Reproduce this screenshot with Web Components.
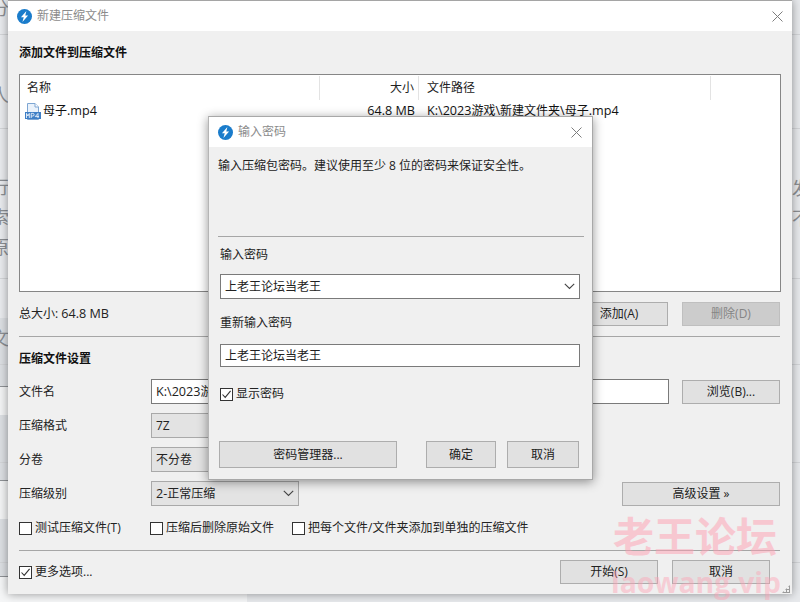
<!DOCTYPE html>
<html lang="zh">
<head>
<meta charset="utf-8">
<title>新建压缩文件</title>
<style>
  html, body { margin: 0; height: 100%; }
  body {
    width: 800px;
    height: 602px;
    overflow: hidden;
    position: relative;
    font: 12px/18px "Open Sans", "Noto Sans CJK SC", sans-serif;
    color: #222;
  }
</style>
</head>
<body>
  <desk-backdrop></desk-backdrop>

  <zip-window>
    <file-list slot="list">
      <file-row name="母子.mp4" size="64.8 MB" path="K:\2023游戏\新建文件夹\母子.mp4"></file-row>
    </file-list>
  </zip-window>

  <password-dialog></password-dialog>

  <water-mark></water-mark>

<script>
// Latin runs are a little larger than the CJK ones in this dialog
const latin = (text) =>
  text.replace(/[\x21-\x7e]+( [\x21-\x7e]+)*/g, (m) => `<span style="font-size:12.6px;line-height:1">${m}</span>`);

const appIcon = (size) => `
  <svg width="${size}" height="${size}" viewBox="0 0 16 16" style="flex:none;display:block">
    <circle cx="8" cy="8" r="8" fill="#1a7ccb"/>
    <path d="M10 2.2 4.2 8.8h3L5.8 13.8l6-6.8H8.8z" fill="#fff"/>
  </svg>`;

const closeIcon = `
  <svg width="11" height="11" viewBox="0 0 11 11" style="display:block">
    <path d="M.5.5l10 10M10.5.5l-10 10" stroke="#7d7d7d" stroke-width="1" fill="none"/>
  </svg>`;

class DeskBackdrop extends HTMLElement {
  constructor() {
    super();
    this.attachShadow({ mode: "open" });
  }

  connectedCallback() {
    this.shadowRoot.innerHTML = `
      <style>
        :host {
          position: absolute;
          inset: 0;
          display: block;
          overflow: hidden;
          color: #8c8f93;
          font-size: 18px;
          line-height: 20px;
          background: linear-gradient(#e9ebee 0 318px, #dcdfe3 318px 386px, #8f9296 386px 387px,
            #f3f4f5 387px 415px, #dcdfe3 415px 480px, #8f9296 480px 481px, #f3f4f5 481px 519px,
            #dcdfe3 519px 576px, #8f9296 576px 577px, #f5f6f7 577px);
        }
        span { position: absolute; }
        .rule { position: absolute; height: 1px; background: #d3d5d8; }
        .right {
          position: absolute;
          left: 792px;
          top: 0;
          width: 8px;
          height: 602px;
          background: #e7e9ec;
        }
        .foot {
          position: absolute;
          left: 247px;
          top: 594px;
          width: 553px;
          height: 8px;
          background: #e7e9ec;
        }
      </style>
      <div class="right"></div>
      <div class="foot"></div>
      <span style="left:-9px;top:-2px">分</span>
      <span style="left:-9px;top:85px">人</span>
      <span style="left:-9px;top:177px">行</span>
      <span style="left:-9px;top:207px">索</span>
      <span style="left:-9px;top:237px">原</span>
      <span style="left:-9px;top:328px">文</span>
      <span style="left:792px;top:178px">发</span>
      <span style="left:792px;top:208px">不</span>
      <div class="rule" style="left:0;width:8px;top:34px"></div>
      <div class="rule" style="left:0;width:8px;top:128px"></div>
      <div class="rule" style="left:0;width:8px;top:278px"></div>
      <div class="rule" style="left:0;width:8px;top:364px"></div>
      <div class="rule" style="left:0;width:8px;top:462px"></div>
      <div class="rule" style="left:0;width:8px;top:562px"></div>
      <div class="rule" style="left:792px;width:8px;top:34px"></div>
      <div class="rule" style="left:792px;width:8px;top:128px"></div>
      <div class="rule" style="left:792px;width:8px;top:278px"></div>
      <div class="rule" style="left:792px;width:8px;top:364px"></div>
      <div class="rule" style="left:792px;width:8px;top:462px"></div>
      <div class="rule" style="left:792px;width:8px;top:562px"></div>
    `;
  }
}

class WinTitlebar extends HTMLElement {
  constructor() {
    super();
    this.attachShadow({ mode: "open" });
  }

  connectedCallback() {
    this.shadowRoot.innerHTML = `
      <style>
        :host {
          display: flex;
          align-items: center;
          height: var(--bar-height, 30px);
          background: #fff;
          color: #8b8b8b;
          padding: 0 var(--bar-right, 15px) 0 var(--bar-left, 9px);
          flex: none;
        }
        .label { margin-left: 5px; flex: 1; }
      </style>
      ${appIcon(15)}
      <div class="label"><slot></slot></div>
      ${closeIcon}
    `;
  }
}

class WinButton extends HTMLElement {
  constructor() {
    super();
    this.attachShadow({ mode: "open" });
  }

  connectedCallback() {
    this.shadowRoot.innerHTML = `
      <style>
        :host {
          display: flex;
          align-items: center;
          justify-content: center;
          box-sizing: border-box;
          width: var(--w, 98px);
          height: var(--h, 24px);
          flex: none;
          background: #e1e1e1;
          border: 1px solid #adadad;
          color: #222;
        }
        :host([disabled]) {
          background: #cccccc;
          border-color: #bfbfbf;
          color: #858585;
        }
      </style>
      <slot></slot>
    `;
  }
}

class WinCheck extends HTMLElement {
  constructor() {
    super();
    this.attachShadow({ mode: "open" });
  }

  connectedCallback() {
    const tick = this.hasAttribute("checked")
      ? `<path d="M2.5 6.5 5.2 9.4 10.6 2.8" stroke="#333" stroke-width="1.1" fill="none"/>`
      : "";
    this.shadowRoot.innerHTML = `
      <style>
        :host { display: flex; align-items: center; height: 18px; flex: none; }
        svg { display: block; margin-right: 3px; flex: none; }
      </style>
      <svg width="13" height="13" viewBox="0 0 13 13">
        <rect x=".5" y=".5" width="12" height="12" fill="#fff" stroke="#333"/>
        ${tick}
      </svg>
      <slot></slot>
    `;
  }
}

class WinSelect extends HTMLElement {
  constructor() {
    super();
    this.attachShadow({ mode: "open" });
  }

  connectedCallback() {
    this.shadowRoot.innerHTML = `
      <style>
        :host {
          display: flex;
          align-items: center;
          box-sizing: border-box;
          width: var(--w, 148px);
          height: var(--h, 25px);
          padding: 0 4px;
          background: #e3e3e3;
          border: 1px solid #a9a9a9;
          color: #222;
        }
        :host([field]) { background: #fff; border-color: #7a7a7a; }
        .value { flex: 1; white-space: nowrap; }
        svg { display: block; flex: none; }
      </style>
      <div class="value"><slot></slot></div>
      <svg width="11" height="7" viewBox="0 0 11 7">
        <path d="M.8.8 5.5 5.5 10.2.8" stroke="#444" stroke-width="1.1" fill="none"/>
      </svg>
    `;
  }
}

class WinInput extends HTMLElement {
  constructor() {
    super();
    this.attachShadow({ mode: "open" });
  }

  connectedCallback() {
    this.shadowRoot.innerHTML = `
      <style>
        :host {
          display: flex;
          align-items: center;
          box-sizing: border-box;
          height: var(--h, 25px);
          padding: 0 4px;
          background: #fff;
          border: 1px solid #7a7a7a;
          white-space: nowrap;
          overflow: hidden;
        }
      </style>
      <div><slot></slot></div>
    `;
  }
}

class FileRow extends HTMLElement {
  constructor() {
    super();
    this.attachShadow({ mode: "open" });
  }

  connectedCallback() {
    this.shadowRoot.innerHTML = `
      <style>
        :host {
          display: grid;
          grid-template-columns: 300px 99px 292px 1fr;
          height: 18px;
          margin-top: 2px;
          color: #111;
        }
        .name { display: flex; align-items: center; padding-left: 5px; }
        .name svg { display: block; margin-right: 2px; flex: none; }
        .size { text-align: right; padding-right: 4px; }
        .path { padding-left: 8px; white-space: nowrap; }
      </style>
      <div class="name">
        <svg width="16" height="17" viewBox="0 0 16 17">
          <path d="M2.5.5h7.5l3.5 3.5v12.5h-11z" fill="#eaf2fb" stroke="#7ea6d3"/>
          <path d="M10 .5v3.5h3.5" fill="#fff" stroke="#7ea6d3"/>
          <rect x="0" y="9" width="16" height="7" fill="#3f7fc6"/>
          <path d="M1.5 15v-4.6l1.4 2.6 1.4-2.6V15M6.2 15v-4.6h1.6a1.2 1.2 0 0 1 0 2.6H6.2M13 15v-4.6l-2.7 3.2H14" stroke="#fff" stroke-width=".8" fill="none"/>
        </svg>
        <span>${latin(this.getAttribute("name"))}</span>
      </div>
      <div class="size">${latin(this.getAttribute("size"))}</div>
      <div class="path">${latin(this.getAttribute("path"))}</div>
    `;
  }
}

class FileList extends HTMLElement {
  constructor() {
    super();
    this.attachShadow({ mode: "open" });
  }

  connectedCallback() {
    this.shadowRoot.innerHTML = `
      <style>
        :host {
          display: block;
          box-sizing: border-box;
          height: 218px;
          width: 762px;
          padding-top: 1px;
          background: #fff;
          border: 1px solid #868686;
        }
        .head {
          display: grid;
          grid-template-columns: 300px 99px 292px 1fr;
          height: 24px;
          line-height: 24px;
        }
        .head div { border-right: 1px solid #e3e3e3; box-sizing: border-box; }
        .head div:last-child { border-right: 0; }
        .c1 { padding-left: 7px; }
        .c2 { text-align: right; padding-right: 4px; }
        .c3 { padding-left: 8px; }
      </style>
      <div class="head">
        <div class="c1">名称</div>
        <div class="c2">大小</div>
        <div class="c3">文件路径</div>
        <div></div>
      </div>
      <slot></slot>
    `;
  }
}

class ZipWindow extends HTMLElement {
  constructor() {
    super();
    this.attachShadow({ mode: "open" });
  }

  connectedCallback() {
    this.shadowRoot.innerHTML = `
      <style>
        :host {
          position: absolute;
          left: 8px;
          top: 0;
          width: 784px;
          height: 594px;
          box-sizing: border-box;
          display: flex;
          flex-direction: column;
          background: #f0f0f0;
          border-top: 1px solid #a5a5a5;
          box-shadow: 0 0 9px rgba(0, 0, 0, .4);
        }
        .body { display: flex; flex-direction: column; padding: 0 11px; }
        h2 { font-size: 12px; line-height: 18px; font-weight: 700; margin: 0; color: #111; }
        hr { border: 0; height: 1px; background: #a6a6a6; margin: 0; width: 761px; }
        .total {
          display: flex;
          align-items: center;
          margin-top: 10px;
          gap: 14px;
          width: 761px;
        }
        .total .spacer { flex: 1; }
        .grid {
          display: grid;
          grid-template-columns: 119px 518px 98px;
          column-gap: 13px;
          grid-auto-rows: 25px;
          row-gap: 9px;
          margin-top: 11px;
          width: 761px;
        }
        .grid > span { line-height: 25px; }
        .grid win-button { align-self: end; }
        .wide { grid-column: 2 / 4; display: flex; justify-content: space-between; align-items: end; }
        .checks { display: flex; margin-top: 13px; width: 761px; }
        .foot {
          display: flex;
          align-items: center;
          gap: 14px;
          margin-top: 9px;
          padding-right: 10px;
          width: 751px;
        }
        .foot .spacer { flex: 1; }
        .grip {
          position: absolute;
          right: 2px;
          bottom: 1px;
          width: 8px;
          height: 8px;
          background: radial-gradient(circle, #9a9a9a 0 1px, transparent 1.1px) 0 0 / 3px 3px;
          clip-path: polygon(100% 0, 100% 100%, 0 100%);
        }
      </style>
      <win-titlebar style="--bar-height:30px;--bar-left:9px;--bar-right:9px">新建压缩文件</win-titlebar>
      <div class="body">
        <h2 style="margin-top:13px">添加文件到压缩文件</h2>
        <div style="margin-top:12px"><slot name="list"></slot></div>
        <div class="total">
          <span>总大小: ${latin("64.8 MB")}</span>
          <span class="spacer"></span>
          <win-button>添加(A)</win-button>
          <win-button disabled>删除(D)</win-button>
        </div>
        <hr style="margin-top:10px">
        <h2 style="margin-top:13px">压缩文件设置</h2>
        <div class="grid">
          <span>文件名</span>
          <win-input>${latin("K:\\2023游戏\\新建文件夹\\母子.7z")}</win-input>
          <win-button>浏览(B)...</win-button>
          <span>压缩格式</span>
          <win-select>7Z</win-select>
          <span></span>
          <span>分卷</span>
          <win-select>不分卷</win-select>
          <span></span>
          <span>压缩级别</span>
          <div class="wide">
            <win-select>${latin("2-")}正常压缩</win-select>
            <win-button style="--w:158px">高级设置 »</win-button>
          </div>
        </div>
        <div class="checks">
          <win-check style="width:131px">测试压缩文件(T)</win-check>
          <win-check style="width:142px">压缩后删除原始文件</win-check>
          <win-check>把每个文件/文件夹添加到单独的压缩文件</win-check>
        </div>
        <hr style="margin-top:13px">
        <div class="foot">
          <win-check checked>更多选项...</win-check>
          <span class="spacer"></span>
          <win-button>开始(S)</win-button>
          <win-button>取消</win-button>
        </div>
      </div>
      <div class="grip"></div>
    `;
  }
}

class PasswordDialog extends HTMLElement {
  constructor() {
    super();
    this.attachShadow({ mode: "open" });
  }

  connectedCallback() {
    this.shadowRoot.innerHTML = `
      <style>
        :host {
          position: absolute;
          left: 208px;
          top: 116px;
          width: 385px;
          height: 364px;
          box-sizing: border-box;
          display: flex;
          flex-direction: column;
          background: #f0f0f0;
          border: 1px solid #a8a8a8;
          border-left-color: #b5b5b5;
          box-shadow: 0 2px 10px rgba(0, 0, 0, .42);
        }
        .body { display: flex; flex-direction: column; padding: 0 8px 0 9px; }
        hr { border: 0; height: 1px; background: #a6a6a6; margin: 61px 0 0; }
        .field { margin: 0 4px 0 2px; }
        .label { margin-left: 2px; }
        .buttons { display: flex; align-items: center; margin: 38px 5px 0 1px; --h: 27px; }
        .buttons .spacer { flex: 1; }
      </style>
      <win-titlebar style="--bar-height:30px;--bar-left:9px;--bar-right:10px">输入密码</win-titlebar>
      <div class="body">
        <div style="margin-top:10px">输入压缩包密码。建议使用至少 8 位的密码来保证安全性。</div>
        <hr>
        <div class="label" style="margin-top:9px">输入密码</div>
        <win-select class="field" field style="--w:360px;margin-top:10px">上老王论坛当老王</win-select>
        <div class="label" style="margin-top:15px">重新输入密码</div>
        <win-input class="field" style="--h:23px;margin-top:12px">上老王论坛当老王</win-input>
        <win-check class="field" checked style="margin-top:18px">显示密码</win-check>
        <div class="buttons">
          <win-button style="--w:178px">密码管理器...</win-button>
          <span class="spacer"></span>
          <win-button style="--w:70px">确定</win-button>
          <win-button style="--w:72px;margin-left:11px">取消</win-button>
        </div>
      </div>
    `;
  }
}

class WaterMark extends HTMLElement {
  constructor() {
    super();
    this.attachShadow({ mode: "open" });
  }

  connectedCallback() {
    this.shadowRoot.innerHTML = `
      <style>
        :host {
          position: absolute;
          left: 613px;
          top: 508px;
          width: 187px;
          display: block;
          pointer-events: none;
          color: #ff9fb2;
          font-weight: 700;
          white-space: nowrap;
        }
        .cn { font-size: 41px; line-height: 56px; opacity: .5; }
        .en {
          font-family: "Open Sans", sans-serif;
          font-size: 28.3px;
          line-height: 36px;
          margin-top: 0;
          margin-left: -2px;
          opacity: .42;
        }
      </style>
      <div class="cn">老王论坛</div>
      <div class="en">laowang.vip</div>
    `;
  }
}

customElements.define("desk-backdrop", DeskBackdrop);
customElements.define("win-titlebar", WinTitlebar);
customElements.define("win-button", WinButton);
customElements.define("win-check", WinCheck);
customElements.define("win-select", WinSelect);
customElements.define("win-input", WinInput);
customElements.define("file-row", FileRow);
customElements.define("file-list", FileList);
customElements.define("zip-window", ZipWindow);
customElements.define("password-dialog", PasswordDialog);
customElements.define("water-mark", WaterMark);
</script>
</body>
</html>
